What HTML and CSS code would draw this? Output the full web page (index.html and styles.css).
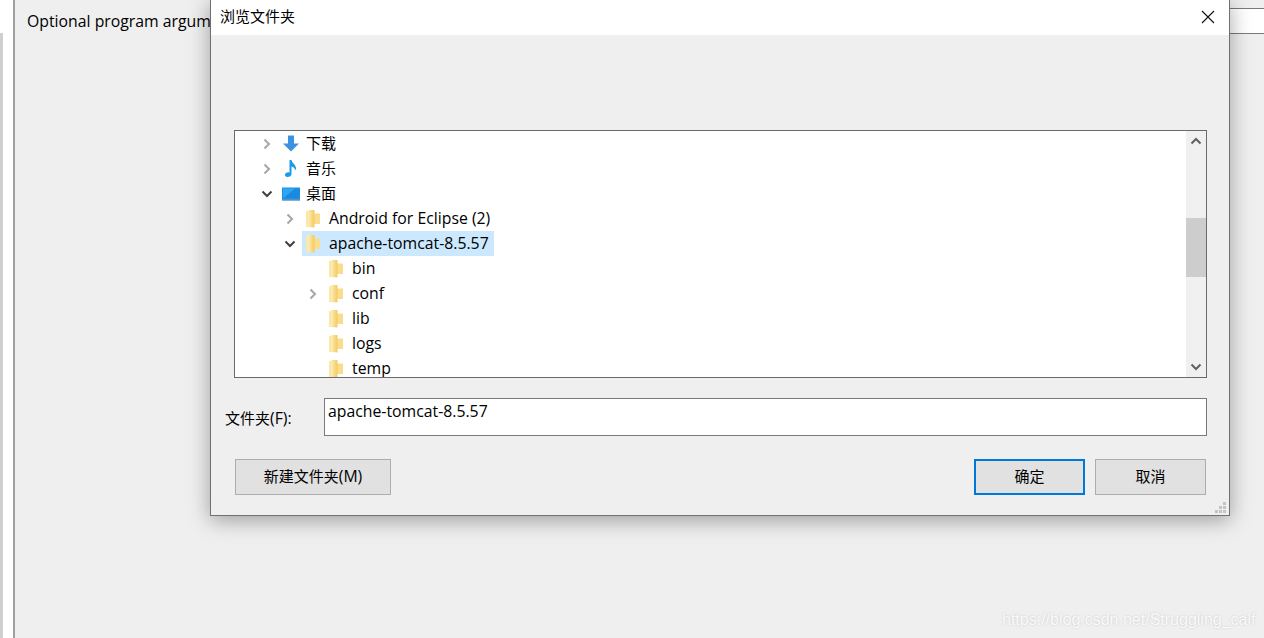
FILE: index.html
```html
<!DOCTYPE html>
<html lang="zh-CN">
<head>
  <meta charset="UTF-8" />
  <meta name="viewport" content="width=device-width, initial-scale=1.0" />
  <title>浏览文件夹</title>
  <link rel="stylesheet" href="styles.css">
</head>
<body>

  <svg class="defs" width="0" height="0">
    <defs>
      <linearGradient id="folder-fill" x1="0" y1="0" x2="1" y2="0">
        <stop offset="0" stop-color="#fdeebb" />
        <stop offset="1" stop-color="#f4c95f" />
      </linearGradient>
    </defs>
    <symbol id="folder" viewBox="0 0 16 18">
      <path d="M0 1h2v16H0z" fill="#fbe7a6" />
      <path d="M8 3.500h6V14H8z" fill="#f9dd8c" />
      <path d="M2 0h6.500v17.500L2 17z" fill="url(#folder-fill)" />
    </symbol>
    <symbol id="arrow" viewBox="0 0 16 18">
      <path d="M5 .5h6v8h5l-8 8-8-8h5z" fill="#3d92e0" />
    </symbol>
    <symbol id="note" viewBox="0 0 16 18">
      <path d="M6.500 0h2c.300 3 4 4 4.500 8 0 1-.500 2-1 2.500.300-2-1.500-3.500-3.500-4V14c0 2-2 3-4 3-1.500 0-2.500-.800-2.500-2 0-2 2.500-3.200 4.500-2.500z" fill="#1a9be8" />
    </symbol>
    <symbol id="desktop" viewBox="0 0 18 18">
      <path d="M0 2.500h18v12H0z" fill="#1b8fe6" />
      <path d="M1 3.500h16v10H1z" fill="#2ea6f2" />
      <path d="M1 13.500 13 3.500h4v10z" fill="#1a8ae0" />
      <path d="M0 14.500h18v1H0z" fill="#0f5f9e" />
    </symbol>
    <symbol id="chev-right" viewBox="0 0 10 12">
      <path d="M2.500 1.500 7 6l-4.500 4.500" fill="none" stroke="#a6a6a6" stroke-width="2" />
    </symbol>
    <symbol id="chev-down" viewBox="0 0 12 10">
      <path d="M1.500 2.500 6 7l4.500-4.500" fill="none" stroke="#404040" stroke-width="2" />
    </symbol>
  </svg>

  <div class="side"><div class="side-bar"></div></div>

  <div class="main">
    <span class="arg-label">Optional program argum</span>
    <div class="arg-field"></div>
  </div>

  <div class="dialog">
    <div class="title-bar">
      <span class="title-text">浏览文件夹</span>
      <svg class="close" width="14" height="14" viewBox="0 0 14 14">
        <path d="M1 1l12 12M13 1 1 13" stroke="#111" stroke-width="1.100" fill="none" />
      </svg>
    </div>

    <div class="dialog-body">
      <div class="tree">
        <ul class="tree-list">
          <li class="row">
            <span class="twist"><svg class="chev-r"><use href="#chev-right" /></svg></span>
            <span class="item cjk"><svg class="icon"><use href="#arrow" /></svg>下载</span>
          </li>
          <li class="row">
            <span class="twist"><svg class="chev-r"><use href="#chev-right" /></svg></span>
            <span class="item cjk"><svg class="icon"><use href="#note" /></svg>音乐</span>
          </li>
          <li class="row">
            <span class="twist"><svg class="chev-d"><use href="#chev-down" /></svg></span>
            <span class="item cjk"><svg class="icon icon-wide"><use href="#desktop" /></svg>桌面</span>
          </li>
          <li class="row lvl1">
            <span class="twist"><svg class="chev-r"><use href="#chev-right" /></svg></span>
            <span class="item"><svg class="icon"><use href="#folder" /></svg>Android for Eclipse (2)</span>
          </li>
          <li class="row lvl1">
            <span class="twist"><svg class="chev-d"><use href="#chev-down" /></svg></span>
            <span class="item selected"><svg class="icon"><use href="#folder" /></svg>apache-tomcat-8.5.57</span>
          </li>
          <li class="row lvl2">
            <span class="twist"></span>
            <span class="item"><svg class="icon"><use href="#folder" /></svg>bin</span>
          </li>
          <li class="row lvl2">
            <span class="twist"><svg class="chev-r"><use href="#chev-right" /></svg></span>
            <span class="item"><svg class="icon"><use href="#folder" /></svg>conf</span>
          </li>
          <li class="row lvl2">
            <span class="twist"></span>
            <span class="item"><svg class="icon"><use href="#folder" /></svg>lib</span>
          </li>
          <li class="row lvl2">
            <span class="twist"></span>
            <span class="item"><svg class="icon"><use href="#folder" /></svg>logs</span>
          </li>
          <li class="row lvl2">
            <span class="twist"></span>
            <span class="item"><svg class="icon"><use href="#folder" /></svg>temp</span>
          </li>
        </ul>
        <div class="scrollbar">
          <svg class="scroll-arrow" width="12" height="8" viewBox="0 0 12 8">
            <path d="M1.500 6.500 6 2l4.500 4.500" fill="none" stroke="#606060" stroke-width="2" />
          </svg>
          <div class="scroll-track"><div class="scroll-thumb"></div></div>
          <svg class="scroll-arrow" width="12" height="8" viewBox="0 0 12 8">
            <path d="M1.500 1.500 6 6l4.500-4.500" fill="none" stroke="#606060" stroke-width="2" />
          </svg>
        </div>
      </div>

      <div class="field-row">
        <label class="field-label" for="folder-name"><span class="cjk">文件夹</span>(F):</label>
        <input class="field-input" id="folder-name" type="text" value="apache-tomcat-8.5.57" />
      </div>

      <div class="button-row">
        <button class="btn btn-new" type="button"><span class="cjk">新建文件夹</span>(M)</button>
        <div class="button-group">
          <button class="btn btn-default" type="button"><span class="cjk">确定</span></button>
          <button class="btn" type="button"><span class="cjk">取消</span></button>
        </div>
      </div>
    </div>

    <svg class="grip" width="11" height="11" viewBox="0 0 11 11">
      <path d="M8 0h3v3H8zM4 4h3v3H4zM8 4h3v3H8zM0 8h3v3H0zM4 8h3v3H4zM8 8h3v3H8z" fill="#c4c4c4" />
    </svg>
  </div>

  <div class="watermark">https://blog.csdn.net/Struggling_calf</div>

</body>
</html>
```

FILE: styles.css
```css
* {
  box-sizing: border-box;
}

html,
body {
  height: 100%;
}

body {
  margin: 0;
  display: flex;
  overflow: hidden;
  background: #efefef;
  color: #000;
  font-family: "Open Sans", "Noto Sans CJK SC", sans-serif;
  font-size: 15.8px;
}

.cjk {
  font-size: 15px;
}

.defs {
  position: absolute;
}

/* strip on the left of the window behind */
.side {
  width: 13px;
  background: #fff;
  padding-top: 33px;
}

.side-bar {
  width: 3px;
  height: 100%;
  background: #cfcfcf;
}

.main {
  flex: 1;
  display: flex;
  align-items: flex-start;
  border-left: 2px solid #a0a0a0;
  padding-left: 12px;
}

.arg-label {
  flex: none;
  margin-top: 11px;
  line-height: 21px;
  white-space: nowrap;
}

.arg-field {
  flex: 1;
  height: 26px;
  margin-top: 8px;
  background: #fff;
  border-top: 1px solid #7a7a7a;
  border-bottom: 1px solid #7a7a7a;
}

/* dialog */
.dialog {
  position: absolute;
  left: 210px;
  top: -1px;
  width: 1020px;
  height: 517px;
  background: #efefef;
  border: 1px solid #707070;
  box-shadow: 0 4px 20px rgba(0, 0, 0, 0.35);
}

.title-bar {
  height: 35px;
  display: flex;
  align-items: center;
  justify-content: space-between;
  padding: 0 14px 0 9px;
  background: #fff;
}

.title-text {
  font-size: 15px;
  padding-bottom: 4px;
}

.dialog-body {
  padding: 95px 22px 0 23px;
}

.tree {
  height: 248px;
  display: flex;
  background: #fff;
  border: 1px solid #6a6a6a;
  overflow: hidden;
}

.tree-list {
  flex: 1;
  margin: 0;
  padding: 0;
  list-style: none;
}

.row {
  height: 25px;
  display: flex;
  align-items: stretch;
  padding-left: 20px;
}

.lvl1 {
  padding-left: 43px;
}

.lvl2 {
  padding-left: 66px;
}

.twist {
  width: 24px;
  display: flex;
  align-items: center;
  justify-content: center;
}

.chev-r {
  width: 10px;
  height: 12px;
}

.chev-d {
  width: 12px;
  height: 10px;
}

.item {
  display: flex;
  align-items: center;
  gap: 7px;
  padding: 0 5px 2px 4px;
  white-space: nowrap;
}

.selected {
  background: #cce8ff;
}

.icon {
  width: 16px;
  height: 18px;
  flex: none;
  margin-top: 2px;
}

.icon-wide {
  width: 18px;
  margin-left: -1px;
  margin-right: -1px;
}

.scrollbar {
  width: 20px;
  display: flex;
  flex-direction: column;
  align-items: center;
  background: #f0f0f0;
}

.scroll-arrow {
  flex: none;
  margin: 6px 1px 6px 0;
}

.scroll-track {
  flex: 1;
  width: 100%;
  padding-top: 67px;
}

.scroll-thumb {
  height: 59px;
  background: #cdcdcd;
}

.field-row {
  display: flex;
  align-items: center;
  margin-top: 20px;
  margin-left: -9px;
}

.field-label {
  width: 99px;
  padding-top: 1px;
}

.field-input {
  flex: 1;
  height: 38px;
  padding: 0 3px 12px;
  border: 1px solid #7a7a7a;
  border-radius: 0;
  background: #fff;
  color: #000;
  font-family: inherit;
  font-size: 15.8px;
  outline: none;
}

.button-row {
  display: flex;
  justify-content: space-between;
  margin-top: 23px;
  margin-left: 1px;
  margin-right: 1px;
}

.button-group {
  display: flex;
  gap: 10px;
}

.btn {
  width: 111px;
  height: 36px;
  background: #e1e1e1;
  border: 1px solid #adadad;
  border-radius: 0;
  color: #000;
  font-family: inherit;
  font-size: 15.8px;
  padding: 0 0 2px;
}

.btn-new {
  width: 156px;
}

.btn-default {
  border: 2px solid #0078d7;
}

.close {
  margin-top: -1px;
}

.grip {
  position: absolute;
  right: 3px;
  bottom: 2px;
}

.watermark {
  position: absolute;
  left: 1002px;
  top: 610px;
  font-family: "Liberation Sans", sans-serif;
  font-size: 16px;
  line-height: 20px;
  color: #fafafa;
  text-shadow: 0 0 2px #c4c4c4;
  white-space: nowrap;
}
```
